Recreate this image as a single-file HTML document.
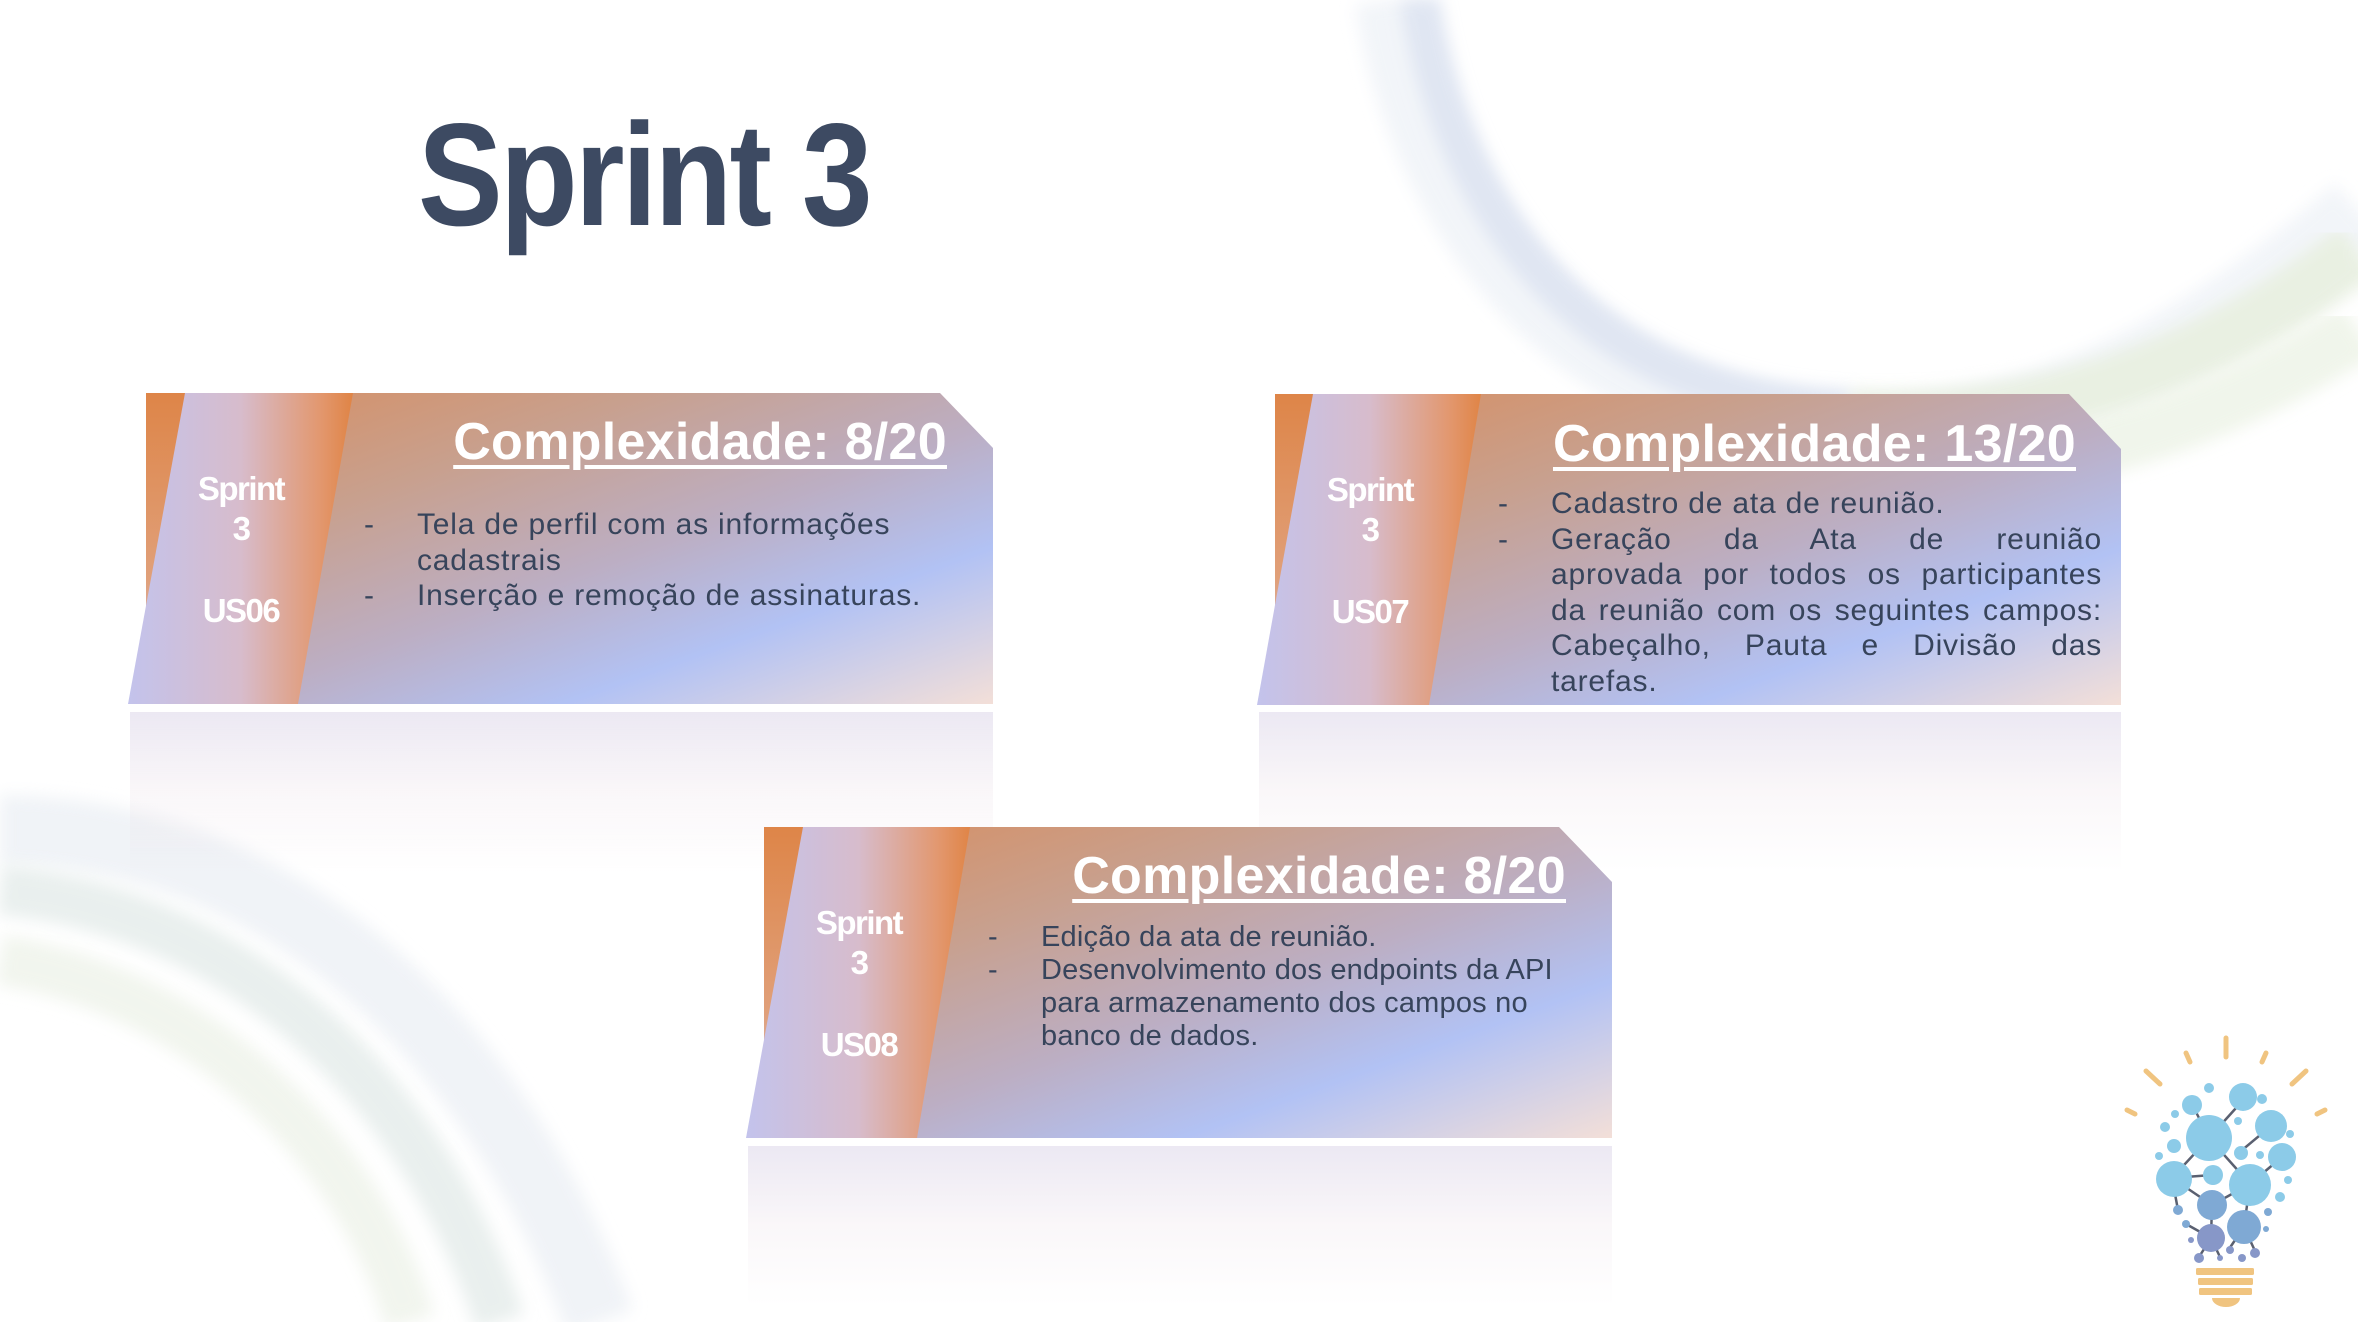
<!DOCTYPE html>
<html><head><meta charset="utf-8"><style>
*{margin:0;padding:0;box-sizing:border-box}
body{width:2358px;height:1322px;position:relative;overflow:hidden;background:#fff;font-family:"Liberation Sans",sans-serif}
.abs{position:absolute}
.card{position:absolute;height:311px}
.bg{position:absolute;inset:0;background:linear-gradient(160deg,#d98c5c 0%,#c8a08e 30%,#bcaec3 55%,#b2c2f4 75%,#f3dfd8 100%);filter:drop-shadow(0 4px 4px rgba(0,0,0,.25))}
.band{position:absolute;top:0;height:311px;background:linear-gradient(90deg,#c3c3ec 0%,#d7bccc 50%,#e29870 85%,#e08445 100%)}
.strip{position:absolute;top:0;height:311px;background:linear-gradient(180deg,#de8548,#e0a07a 60%,#c9c4e8)}
.side{position:absolute;color:#fff;font-weight:bold;font-size:33px;text-align:center;width:120px;line-height:40px;letter-spacing:-1.5px}
.title{position:absolute;color:#fff;font-weight:bold;font-size:52px;text-decoration:underline;text-decoration-thickness:4px;text-underline-offset:6px;white-space:nowrap;letter-spacing:0.3px}
.bl{position:absolute;color:#37445b;font-size:30px;line-height:35.5px;letter-spacing:0.8px}
.bl div{position:relative;padding-left:53px}
.bl div:before{content:"-";position:absolute;left:0}
.j span{display:block;text-align:justify;text-align-last:justify;white-space:nowrap}
.j span.l{text-align-last:left}
.refl{position:absolute;height:160px;background:linear-gradient(180deg,rgba(200,190,220,.35),rgba(230,215,225,.2) 50%,rgba(255,255,255,0));}
</style></head><body>
<svg class="abs" style="left:0;top:0" width="2358" height="1322">
<defs><filter id="b"><feGaussianBlur stdDeviation="8"/></filter></defs>
<g opacity="0.75">
<path d="M1390,0 C1420,200 1560,420 1850,430 C2050,440 2220,330 2358,210" fill="none" stroke="#eef2f7" stroke-width="70" filter="url(#b)"/>
<path d="M1420,0 C1450,200 1580,400 1850,410" fill="none" stroke="#d6deee" stroke-width="40" filter="url(#b)"/>
<path d="M1850,420 C2050,430 2220,360 2358,250" fill="none" stroke="#e2ebd9" stroke-width="60" filter="url(#b)"/>
<path d="M1900,470 C2100,470 2250,400 2358,330" fill="none" stroke="#ebf2e4" stroke-width="60" filter="url(#b)"/>
<path d="M0,830 C250,830 480,1000 600,1322" fill="none" stroke="#ebeff4" stroke-width="70" filter="url(#b)"/>
<path d="M0,890 C230,910 420,1080 500,1322" fill="none" stroke="#e2eae8" stroke-width="50" filter="url(#b)"/>
<path d="M0,960 C200,990 360,1150 410,1322" fill="none" stroke="#edf2e8" stroke-width="50" filter="url(#b)"/>
</g>
</svg>
<div class="abs" style="left:418px;top:95px;font-size:146px;font-weight:bold;color:#3d4a62;letter-spacing:-3px;line-height:160px;transform:scaleX(0.87);transform-origin:0 0">Sprint 3</div>

<div class="refl" style="left:130px;top:712px;width:863px"></div>
<div class="refl" style="left:1259px;top:712px;width:862px"></div>
<div class="refl" style="left:748px;top:1146px;width:864px"></div>

<!-- card 1 -->
<div class="card" style="left:128px;top:393px;width:865px">
<div class="bg" style="clip-path:polygon(18px 0,812px 0,865px 55px,865px 311px,18px 311px)"></div>
<div class="strip" style="left:18px;width:60px;clip-path:polygon(0 0,100% 0,0 100%)"></div>
<div class="band" style="left:0;width:225px;clip-path:polygon(57px 0,225px 0,170px 311px,0 311px)"></div>
<div class="side" style="left:53px;top:76px">Sprint<br>3</div>
<div class="side" style="left:53px;top:198px">US06</div>
<div class="title" style="right:46px;top:19px">Complexidade: 8/20</div>
<div class="bl" style="left:236px;top:114px;width:560px"><div>Tela de perfil com as informações cadastrais</div><div>Inserção e remoção de assinaturas.</div></div>
</div>

<!-- card 2 -->
<div class="card" style="left:1257px;top:394px;width:864px">
<div class="bg" style="clip-path:polygon(18px 0,812px 0,864px 55px,864px 311px,18px 311px)"></div>
<div class="strip" style="left:18px;width:60px;clip-path:polygon(0 0,100% 0,0 100%)"></div>
<div class="band" style="left:0;width:225px;clip-path:polygon(56px 0,224px 0,172px 311px,0 311px)"></div>
<div class="side" style="left:53px;top:76px">Sprint<br>3</div>
<div class="side" style="left:53px;top:198px">US07</div>
<div class="title" style="right:45px;top:20px">Complexidade: 13/20</div>
<div class="bl j" style="left:241px;top:92px;width:604px"><div><span class="l">Cadastro de ata de reunião.</span></div><div><span>Geração da Ata de reunião</span><span>aprovada por todos os participantes</span><span>da reunião com os seguintes campos:</span><span>Cabeçalho, Pauta e Divisão das</span><span class="l">tarefas.</span></div></div>
</div>

<!-- card 3 -->
<div class="card" style="left:746px;top:827px;width:866px">
<div class="bg" style="clip-path:polygon(18px 0,813px 0,866px 55px,866px 311px,18px 311px)"></div>
<div class="strip" style="left:18px;width:60px;clip-path:polygon(0 0,100% 0,0 100%)"></div>
<div class="band" style="left:0;width:225px;clip-path:polygon(57px 0,224px 0,171px 311px,0 311px)"></div>
<div class="side" style="left:53px;top:76px">Sprint<br>3</div>
<div class="side" style="left:53px;top:198px">US08</div>
<div class="title" style="right:46px;top:19px">Complexidade: 8/20</div>
<div class="bl" style="left:242px;top:94px;width:600px;font-size:29px;line-height:33px;letter-spacing:0.2px"><div>Edição da ata de reunião.</div><div>Desenvolvimento dos endpoints da API para armazenamento dos campos no banco de dados.</div></div>
</div>

<!-- bulb -->
<svg class="abs" style="left:2100px;top:1020px" width="258" height="302" viewBox="0 0 258 302">
<g stroke="#f0c480" stroke-width="5" stroke-linecap="round">
<line x1="126" y1="18" x2="126" y2="37"/><line x1="86" y1="33" x2="90" y2="42"/><line x1="166" y1="33" x2="162" y2="42"/>
<line x1="46" y1="51" x2="60" y2="64"/><line x1="206" y1="51" x2="192" y2="64"/><line x1="27" y1="90" x2="35" y2="94"/><line x1="225" y1="90" x2="217" y2="94"/>
</g>
<g stroke="#5a6070" stroke-width="2.5">
<line x1="109" y1="118" x2="72" y2="158"/><line x1="109" y1="118" x2="145" y2="78"/><line x1="109" y1="118" x2="150" y2="164"/><line x1="109" y1="118" x2="92" y2="84"/>
<line x1="72" y1="158" x2="112" y2="155"/><line x1="72" y1="158" x2="112" y2="185"/><line x1="150" y1="164" x2="112" y2="185"/><line x1="150" y1="164" x2="182" y2="137"/>
<line x1="112" y1="185" x2="111" y2="218"/><line x1="150" y1="164" x2="144" y2="207"/><line x1="171" y1="106" x2="141" y2="131"/><line x1="72" y1="158" x2="78" y2="190"/>
<line x1="144" y1="207" x2="129" y2="229"/><line x1="144" y1="207" x2="155" y2="231"/><line x1="111" y1="218" x2="99" y2="237"/><line x1="111" y1="218" x2="120" y2="237"/><line x1="111" y1="218" x2="86" y2="204"/>
</g>
<g fill="#8ccbe8">
<circle cx="109" cy="118" r="23"/><circle cx="143" cy="77" r="14"/><circle cx="92" cy="85" r="10"/><circle cx="109" cy="68" r="5"/><circle cx="75" cy="94" r="4"/>
<circle cx="171" cy="106" r="16"/><circle cx="162" cy="79" r="5"/><circle cx="138" cy="101" r="4"/><circle cx="74" cy="126" r="7"/><circle cx="65" cy="107" r="5"/><circle cx="59" cy="136" r="4"/>
<circle cx="182" cy="137" r="14"/><circle cx="190" cy="114" r="4"/><circle cx="188" cy="160" r="4"/><circle cx="160" cy="135" r="4"/>
<circle cx="141" cy="133" r="7"/><circle cx="74" cy="159" r="18"/><circle cx="113" cy="155" r="10"/><circle cx="150" cy="165" r="21"/><circle cx="180" cy="177" r="5"/>
</g>
<g fill="#7fa9d4"><circle cx="112" cy="185" r="15"/><circle cx="144" cy="207" r="17"/><circle cx="78" cy="190" r="5"/><circle cx="86" cy="204" r="4"/><circle cx="168" cy="192" r="4"/><circle cx="166" cy="209" r="3"/></g>
<g fill="#8797c8"><circle cx="111" cy="218" r="14"/><circle cx="99" cy="238" r="5"/><circle cx="120" cy="238" r="3"/><circle cx="91" cy="220" r="3"/><circle cx="155" cy="233" r="5"/><circle cx="130" cy="230" r="4"/><circle cx="142" cy="238" r="4"/></g>
<g fill="#f0c480"><rect x="96" y="248" width="58" height="7" rx="1.5"/><rect x="98" y="258" width="55" height="7" rx="1.5"/><rect x="99" y="268" width="53" height="7" rx="1.5"/><path d="M112,278 h28 a14,9 0 0 1 -28,0z"/></g>
</svg>
</body></html>
